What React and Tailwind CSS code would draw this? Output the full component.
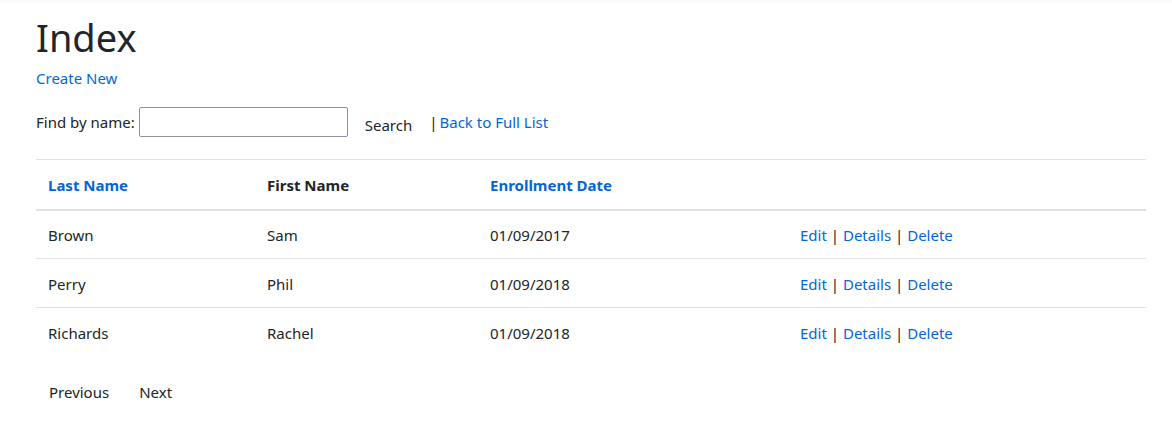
import React from "react";

const students = [
    { last: "Brown", first: "Sam", date: "01/09/2017" },
    { last: "Perry", first: "Phil", date: "01/09/2018" },
    { last: "Richards", first: "Rachel", date: "01/09/2018" },
];

export default function App() {
    return (
        <div className="min-h-[430px] bg-white text-[#212529] text-[15px]" style={{ fontFamily: '"Noto Sans", "Open Sans", sans-serif' }}>
            {/* navbar shadow remnant */}
            <div className="h-[5px] bg-gradient-to-b from-[#f7f7f7] to-white" />

            <div className="pl-[36px] w-[1146px]">
                <h1 className="mt-[8px] h-[48px] leading-[48px] text-[38px] font-normal">Index</h1>

                <p className="mt-[5px] h-6 leading-6">
                    <a href="#" className="text-[#0366d6]">Create New</a>
                </p>

                <form className="mt-[17px] flex items-center h-[30px]">
                    <label className="leading-6">Find by name:</label>
                    <input
                        type="text"
                        className="ml-[4px] w-[209px] h-[30px] border border-[#8f8f9d] rounded-[2px] px-1 outline-none"
                    />
                    <button type="button" className="ml-[5px] px-3 pt-[5px] leading-6 text-[#212529]">Search</button>
                    <span className="ml-[5px] leading-6">|</span>
                    <a href="#" className="ml-[2px] leading-6 text-[#0366d6]">Back to Full List</a>
                </form>

                <table className="mt-[22px] w-[1110px] border-collapse">
                    <thead>
                        <tr className="border-t border-[#dee2e6] border-b-2">
                            <th className="w-[219px] h-[50px] px-3 pt-[2px] text-left font-bold">
                                <a href="#" className="text-[#0366d6]">Last Name</a>
                            </th>
                            <th className="w-[223px] px-3 pt-[2px] text-left font-bold">First Name</th>
                            <th className="w-[310px] px-3 pt-[2px] text-left font-bold">
                                <a href="#" className="text-[#0366d6]">Enrollment Date</a>
                            </th>
                            <th className="px-3" />
                        </tr>
                    </thead>
                    <tbody>
                        {students.map((s, i) => (
                            <tr key={s.last} className={i > 0 ? "border-t border-[#dee2e6]" : ""}>
                                <td className="h-[49px] px-3 pt-[2px]">{s.last}</td>
                                <td className="px-3 pt-[2px]">{s.first}</td>
                                <td className="px-3 pt-[2px]">{s.date}</td>
                                <td className="px-3 pt-[2px]">
                                    <a href="#" className="text-[#0366d6]">Edit</a> |{" "}
                                    <a href="#" className="text-[#0366d6]">Details</a> |{" "}
                                    <a href="#" className="text-[#0366d6]">Delete</a>
                                </td>
                            </tr>
                        ))}
                    </tbody>
                </table>

                <div className="mt-4 flex items-center h-[38px]">
                    <a href="#" className="px-[13px] leading-6">Previous</a>
                    <a href="#" className="ml-[4px] px-[13px] leading-6">Next</a>
                </div>
            </div>
        </div>
    );
}
